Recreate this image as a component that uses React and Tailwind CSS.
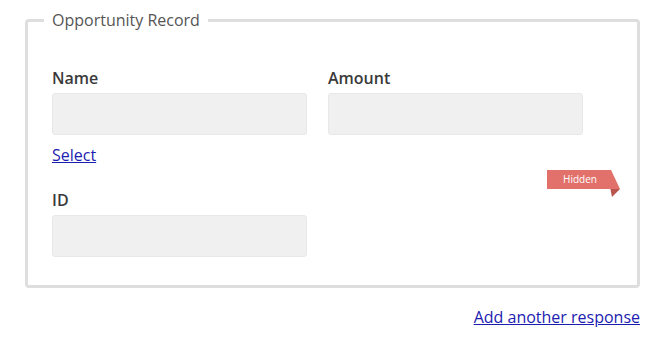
import React from "react";

function Field({ label, children }) {
  return (
    <div className="flex flex-col">
      <label className="text-[16px] leading-[22px] font-semibold text-[#3a3a3a]">{label}</label>
      <div className="mt-[4px] h-[42px] w-[255px] rounded-[3px] border border-[#e8e8e8] bg-[#f0f0f0]" />
      {children}
    </div>
  );
}

export default function App() {
  return (
    <div className="w-[661px] h-[346px] bg-white pt-[9px] font-['Open_Sans',sans-serif]">
      <fieldset className="relative ml-[25px] mr-[21px] rounded-[4px] border-[3px] border-[#dedede] px-[16px] pb-[28px] pt-[36px]">
        <legend className="px-[8px] text-[16px] leading-[22px] text-[#555]">Opportunity Record</legend>
        <div className="px-[8px]">
          <div className="grid grid-cols-[255px_255px] gap-x-[21px]">
            <Field label="Name">
              <a href="#" className="mt-[9px] self-start text-[16px] leading-[22px] text-[#1c1cb0] underline">Select</a>
            </Field>
            <Field label="Amount" />
          </div>
          <div className="mt-[23px]">
            <Field label="ID" />
          </div>
        </div>
        <div className="absolute left-[519px] top-[139px] h-[28px] w-[74px]">
          <svg width="74" height="28" viewBox="0 0 74 28" className="absolute inset-0">
            <polygon points="63,17 73,19 65,27" fill="#b9554d" />
            <polygon points="0,0 64,0 73,19 0,19" fill="#e1716a" />
          </svg>
          <span className="absolute left-0 top-0 flex h-[19px] w-[66px] items-center justify-center text-[10px] text-white">Hidden</span>
        </div>
      </fieldset>
      <div className="mr-[21px] mt-[18px] flex justify-end">
        <a href="#" className="text-[16px] leading-[22px] text-[#1c1cb0] underline">Add another response</a>
      </div>
    </div>
  );
}
